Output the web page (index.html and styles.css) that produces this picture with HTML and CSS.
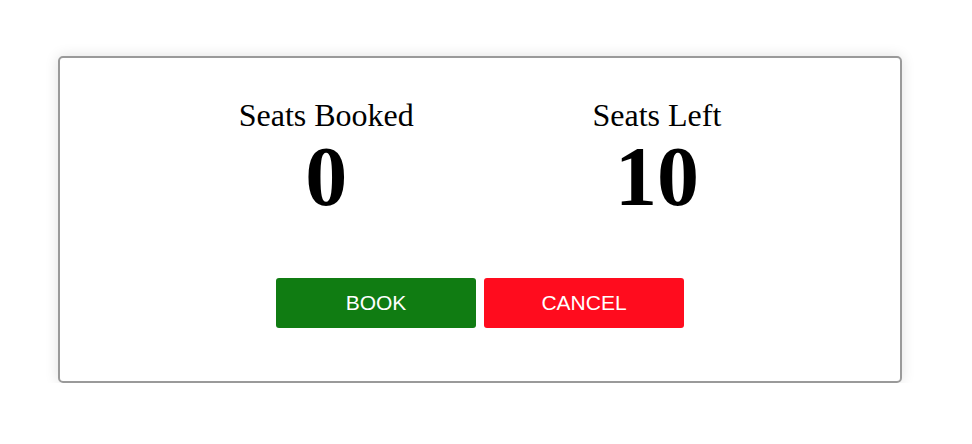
FILE: index.html
```html
<!DOCTYPE html>
<html>
<head>
<meta charset="utf-8">
<link rel="stylesheet" href="styles.css">
</head>
<body>
<div class="card">
  <div class="stats">
    <div class="stat">
      <div class="label">Seats Booked</div>
      <div class="value">0</div>
    </div>
    <div class="stat">
      <div class="label">Seats Left</div>
      <div class="value">10</div>
    </div>
  </div>
  <div class="actions">
    <button class="btn btn-book">BOOK</button>
    <button class="btn btn-cancel">CANCEL</button>
  </div>
</div>
</body>
</html>
```
FILE: styles.css
```css
html, body {
  margin: 0;
  padding: 0;
  background: #fff;
}
body {
  padding: 56px 70px 0 58px;
}
.card {
  border: 2px solid #9a9a9a;
  border-radius: 5px;
  box-shadow: 0 0 14px rgba(0, 0, 0, 0.12);
  padding: 41px 0 53px;
  font-family: "Liberation Serif", "Times New Roman", serif;
  color: #000;
}
.stats {
  display: flex;
  justify-content: space-evenly;
}
.stat {
  display: flex;
  flex-direction: column;
  align-items: center;
  gap: 4px;
}
.label {
  font-size: 32px;
  line-height: 1;
}
.value {
  font-size: 84px;
  font-weight: bold;
  line-height: 1;
}
.actions {
  display: flex;
  justify-content: center;
  gap: 8px;
  margin-top: 59px;
}
.btn {
  width: 200px;
  height: 50px;
  border: none;
  border-radius: 3px;
  color: #fff;
  font-family: "Liberation Sans", Arial, sans-serif;
  font-size: 21px;
  padding: 0;
}
.btn-book {
  background: #107c12;
}
.btn-cancel {
  background: #ff0c1e;
}
```
